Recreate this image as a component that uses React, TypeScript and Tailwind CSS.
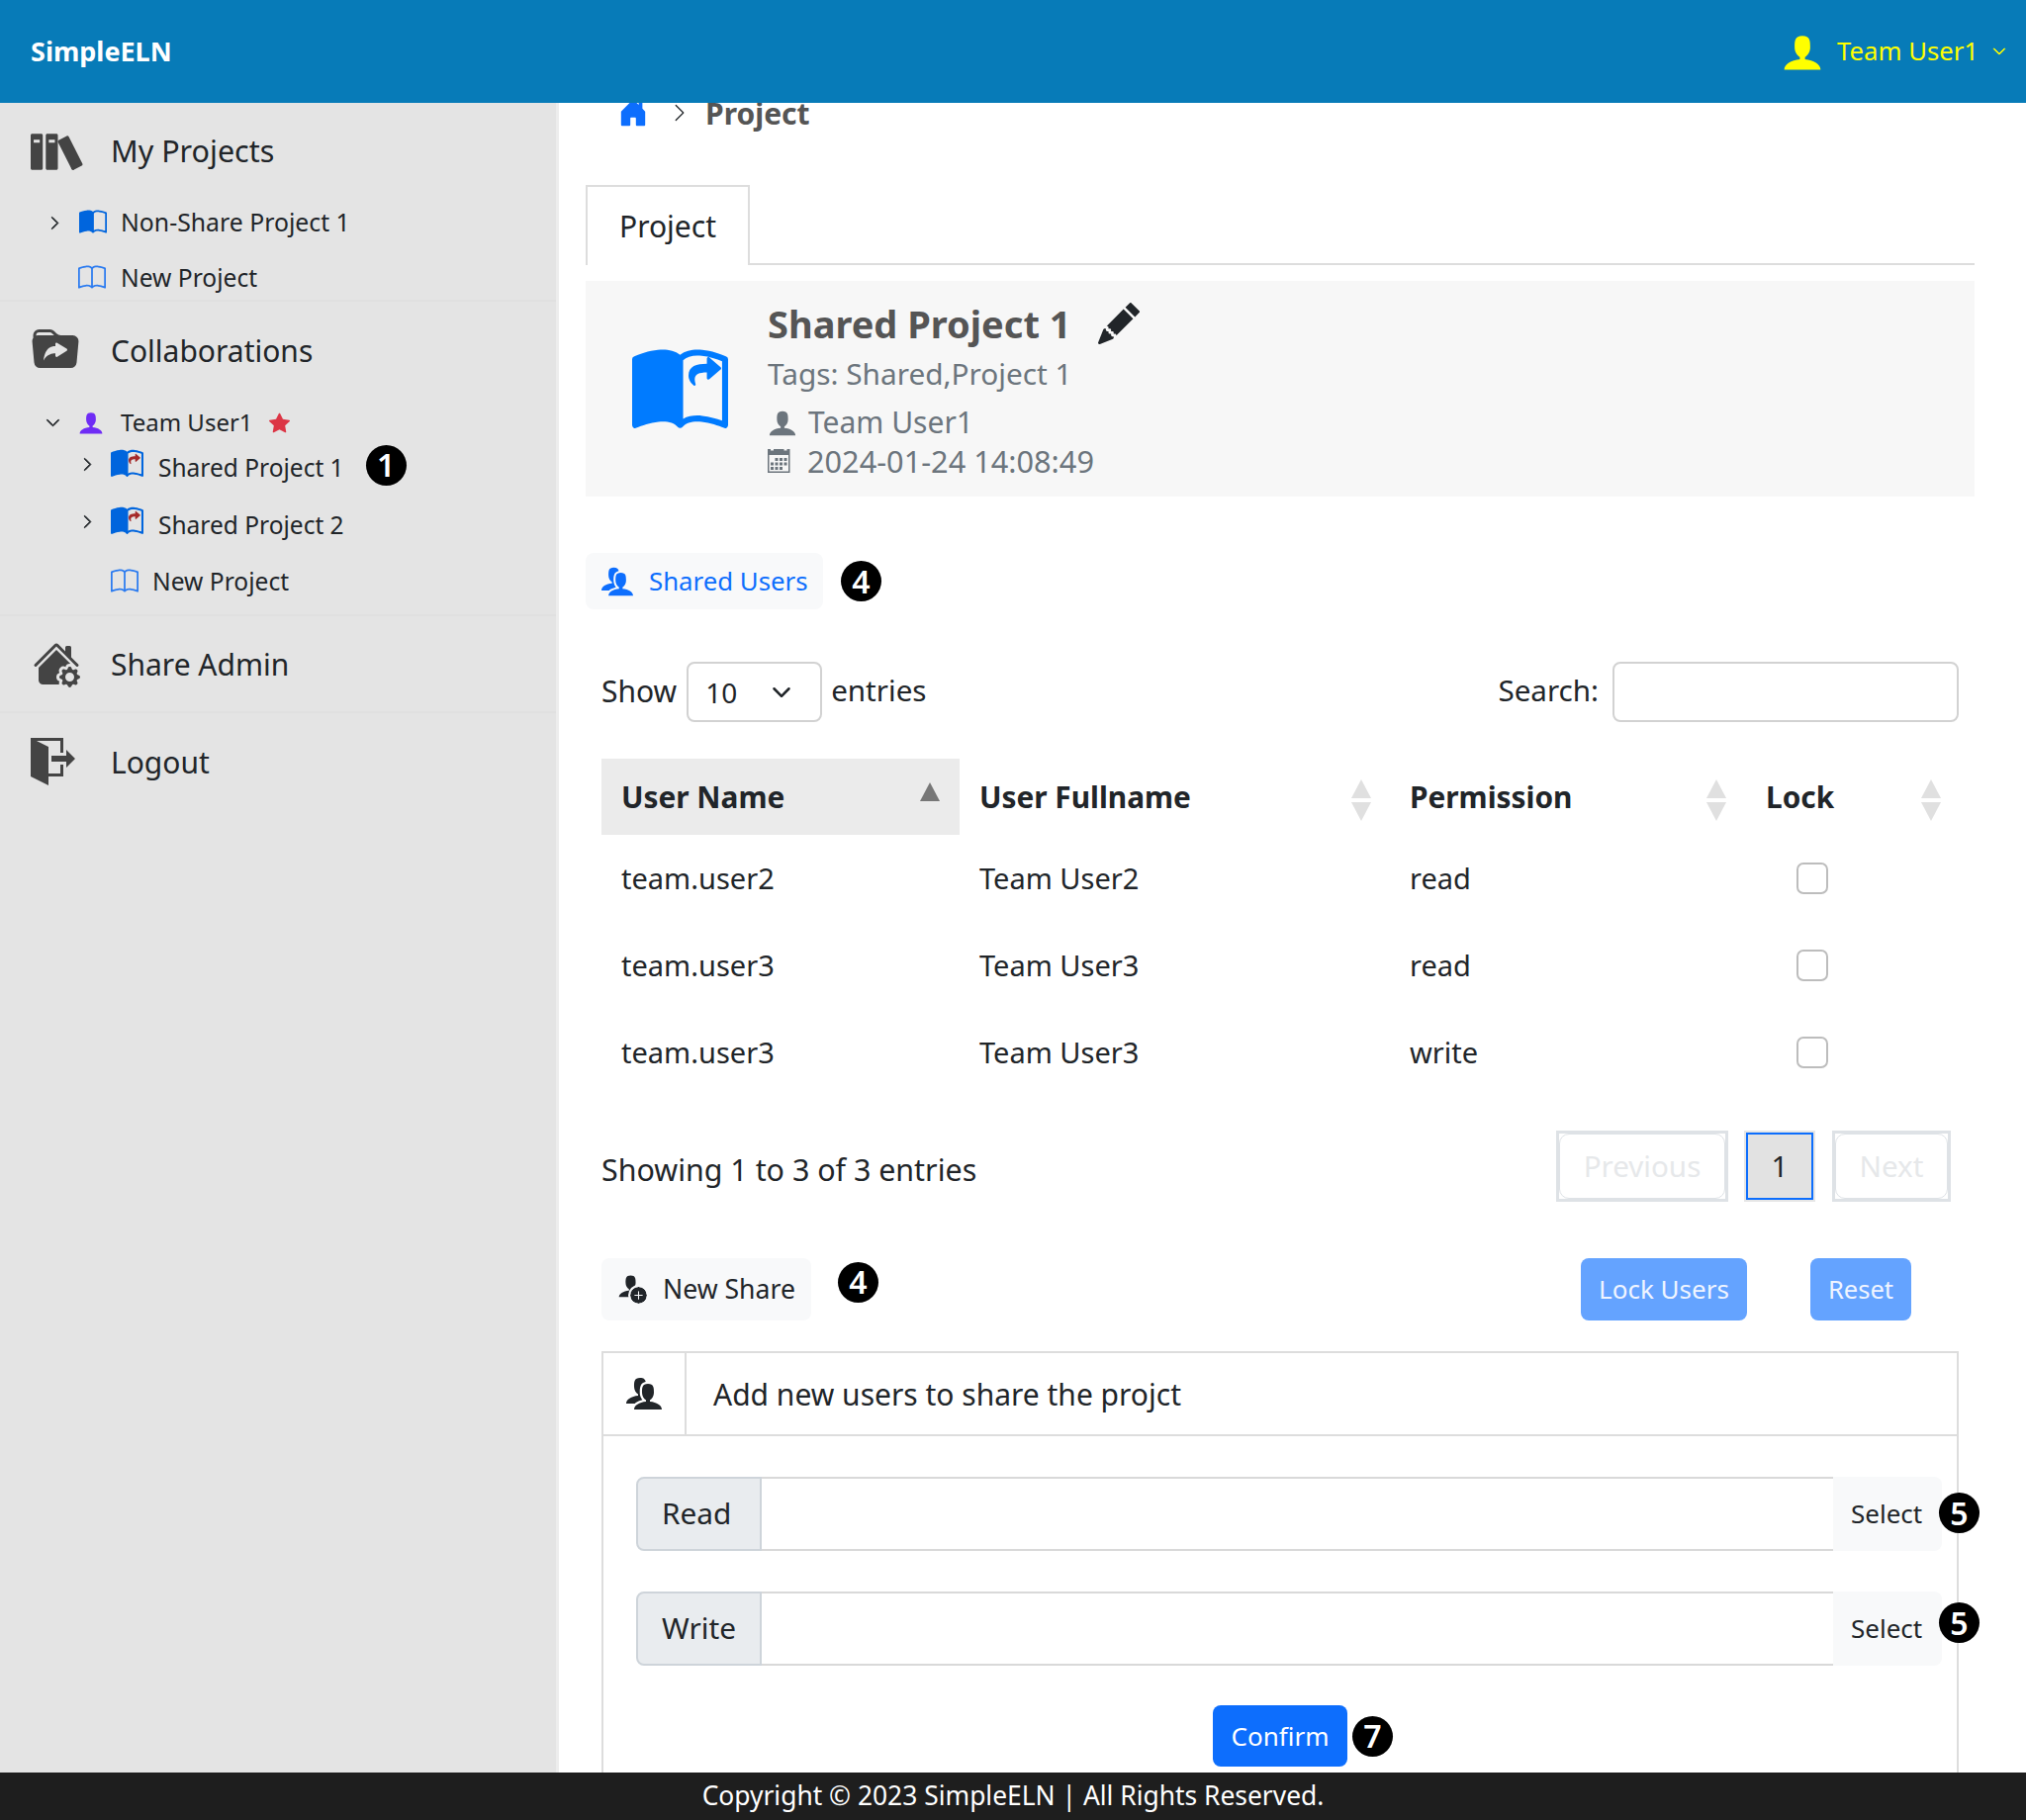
import React from 'react';
import { BsBook, BsBookHalf, BsChevronDown, BsChevronRight, BsFillHouseGearFill, BsFolderSymlinkFill, BsHouseDoorFill, BsPencilFill, BsPlusCircleFill, BsStarFill } from 'react-icons/bs';
import { FaShare } from 'react-icons/fa';
import { ImBooks, ImCalendar, ImExit, ImUser, ImUsers } from 'react-icons/im';

function Badge({ n, className = '' }: { n: number; className?: string }) {
    return (
        <span className={`inline-flex w-[41px] h-[41px] shrink-0 items-center justify-center rounded-full bg-black text-white text-[32px] font-semibold leading-none ${className}`}>
            {n}
        </span>
    );
}

function SharedBook({ size, arrow, className = '' }: { size: number; arrow: string; className?: string }) {
    return (
        <span className={`relative inline-block shrink-0 text-[#0065dd] ${className}`} style={{ width: size, height: size }}>
            <BsBookHalf size={size} />
            <FaShare size={size * 0.36} className={`absolute ${arrow}`} style={{ left: size * 0.56, top: size * 0.16 }} />
        </span>
    );
}

function SortArrows({ active }: { active?: boolean }) {
    if (active) {
        return (
            <svg width="20" height="42" viewBox="0 0 20 42" className="shrink-0 mt-[12px]">
                <polygon points="10,0 20,19 0,19" fill="#777777" />
            </svg>
        );
    }
    return (
        <svg width="20" height="42" viewBox="0 0 20 42" className="shrink-0 mt-[6px] translate-x-[1px]">
            <polygon points="10,0 20,19 0,19" fill="#e0e0e0" />
            <polygon points="0,23 20,23 10,42" fill="#e0e0e0" />
        </svg>
    );
}

const rows = [
    ['team.user2', 'Team User2', 'read'],
    ['team.user3', 'Team User3', 'read'],
    ['team.user3', 'Team User3', 'write'],
];

function Sidebar() {
    return (
        <aside className="w-[565px] shrink-0 bg-[#e4e4e4] border-r-[3px] border-[#ededed] text-[#212529]">
            <div className="h-[201px] pt-[22px] border-b-[2px] border-[#e0e0e0]">
                <div className="h-[54px] flex items-center pl-[31px] text-[#444444]">
                    <ImBooks size={55} className="shrink-0" />
                    <span className="ml-[26px] text-[30.5px] text-[#212529]">My Projects</span>
                </div>
                <div className="h-[56px] mt-[17px] flex items-center pl-[48px]">
                    <BsChevronRight size={15} className="stroke-1" />
                    <BsBookHalf size={28} className="ml-[17px] text-[#0065dd]" />
                    <span className="ml-[14px] text-[24.8px]">Non-Share Project 1</span>
                </div>
                <div className="h-[48px] mt-[4px] flex items-center pl-[79px]">
                    <BsBook size={28} className="text-[#2b7bf0]" />
                    <span className="ml-[15px] text-[24.6px]">New Project</span>
                </div>
            </div>
            <div className="h-[318px] pt-[22px] border-b-[2px] border-[#e0e0e0]">
                <div className="h-[54px] flex items-center pl-[32px] text-[#444444]">
                    <BsFolderSymlinkFill size={48} className="shrink-0" />
                    <span className="ml-[32px] text-[30px] text-[#212529]">Collaborations</span>
                </div>
                <div className="h-[40px] mt-[26px] flex items-center pl-[46px]">
                    <BsChevronDown size={15} className="stroke-1" />
                    <ImUser size={26} className="ml-[18px] text-[#6f2cf5]" />
                    <span className="ml-[17px] text-[24px]">Team User1</span>
                    <BsStarFill size={21} className="ml-[16px] text-[#dc3545]" />
                </div>
                <div className="h-[50px] flex items-center pl-[81px]">
                    <BsChevronRight size={15} className="stroke-1 -mt-[6px]" />
                    <SharedBook size={33} arrow="text-[#a52a2a]" className="ml-[16px] -mt-[6px]" />
                    <span className="ml-[15px] mt-[3px] text-[24.5px]">Shared Project 1</span>
                    <Badge n={1} className="ml-[22px] -mt-[4px]" />
                </div>
                <div className="h-[50px] mt-[8px] flex items-center pl-[81px]">
                    <BsChevronRight size={15} className="stroke-1 -mt-[6px]" />
                    <SharedBook size={33} arrow="text-[#a52a2a]" className="ml-[16px] -mt-[6px]" />
                    <span className="ml-[15px] mt-[3px] text-[24.5px]">Shared Project 2</span>
                </div>
                <div className="h-[50px] mt-[8px] flex items-center pl-[112px]">
                    <BsBook size={28} className="text-[#2b7bf0]" />
                    <span className="ml-[14px] text-[24.6px]">New Project</span>
                </div>
            </div>
            <div className="h-[98px] flex items-center pl-[33px] border-b-[2px] border-[#e0e0e0] text-[#444444]">
                <BsFillHouseGearFill size={48} className="shrink-0" />
                <span className="ml-[31px] text-[30px] text-[#212529]">Share Admin</span>
            </div>
            <div className="h-[98px] flex items-center pl-[31px] text-[#444444]">
                <ImExit size={48} className="shrink-0" />
                <span className="ml-[33px] text-[30px] text-[#212529]">Logout</span>
            </div>
        </aside>
    );
}

function SharedTable() {
    return (
        <table className="w-[1372px] ml-[16px] mt-[37px] table-fixed border-collapse text-[29px] text-[#212529]">
            <thead>
                <tr className="h-[77px] text-[29.8px] font-semibold">
                    <th className="w-[362px] bg-[#ebebeb] pl-[20px] pr-[20px] text-left">
                        <div className="flex items-center justify-between"><span className="mt-[2px]">User Name</span><SortArrows active /></div>
                    </th>
                    <th className="w-[435px] pl-[20px] pr-[20px] text-left">
                        <div className="flex items-center justify-between"><span className="mt-[2px]">User Fullname</span><SortArrows /></div>
                    </th>
                    <th className="w-[360px] pl-[20px] pr-[21px] text-left">
                        <div className="flex items-center justify-between"><span className="mt-[2px]">Permission</span><SortArrows /></div>
                    </th>
                    <th className="pl-[20px] pr-[19px] text-left">
                        <div className="flex items-center justify-between"><span className="mt-[2px]">Lock</span><SortArrows /></div>
                    </th>
                </tr>
            </thead>
            <tbody>
                {rows.map((r, i) => (
                    <tr key={i} className="h-[88px]">
                        <td className="pl-[20px]">{r[0]}</td>
                        <td className="pl-[20px]">{r[1]}</td>
                        <td className="pl-[20px]">{r[2]}</td>
                        <td className="pl-[51px]">
                            <input type="checkbox" className="block w-8 h-8 appearance-none bg-white border-2 border-[#bdbdbd] rounded-[7px]" />
                        </td>
                    </tr>
                ))}
            </tbody>
        </table>
    );
}

function SelectRow({ label, badgeClass }: { label: string; badgeClass: string }) {
    return (
        <div className="relative flex h-[75px] ml-[33px] w-[1320px]">
            <div className="w-[127px] flex items-center pl-[24px] bg-[#e9ecef] border-2 border-[#ced4da] rounded-l-[8px] text-[29.8px]">{label}</div>
            <div className="flex-1 border-y-2 border-[#d9d9d9]"></div>
            <button className="w-[110px] pl-[18px] text-left text-[26px] text-[#212529] bg-[#f8f9fa] rounded-r-[8px]">Select</button>
            <Badge n={5} className={`absolute -right-[38px] ${badgeClass}`} />
        </div>
    );
}

export default function App() {
    return (
        <div className="h-[1840px] flex flex-col overflow-hidden bg-white font-['Noto_Sans',sans-serif] text-[28px] text-[#212529]">
            <header className="h-[104px] shrink-0 flex items-center justify-between bg-[#077bb8] pl-[31px] pr-[20px]">
                <span className="text-[27px] font-bold text-white">SimpleELN</span>
                <div className="flex items-center text-[#ffff00]">
                    <ImUser size={42} />
                    <span className="ml-[14px] text-[25.7px]">Team User1</span>
                    <BsChevronDown size={14} className="ml-[14px] stroke-1" />
                </div>
            </header>
            <div className="flex-1 flex min-h-0">
                <Sidebar />
                <main className="flex-1 min-w-0 overflow-hidden pl-[27px] pr-[52px]">
                    <div className="h-[50px] -mt-[15px] flex items-center pl-[33px]">
                        <BsHouseDoorFill size={30} className="text-[#0d6efd]" />
                        <BsChevronRight size={20} className="ml-[22px]" />
                        <span className="ml-[16px] text-[30px] font-bold text-[#555555]">Project</span>
                    </div>
                    <div className="mt-[48px] h-[81px] border-b-2 border-[#dddddd]">
                        <div className="w-[166px] h-[81px] flex items-center justify-center bg-white border-2 border-b-0 border-[#dddddd] text-[30px]">Project</div>
                    </div>
                    <section className="mt-[16px] h-[218px] flex bg-[#f7f7f7]">
                        <div className="w-[184px] shrink-0 flex items-center pl-[47px]">
                            <span className="relative block w-[97px] h-[97px] mt-[7px] text-[#007bff]">
                                <BsBookHalf size={97} />
                                <FaShare size={33} className="absolute left-[57px] top-[11px]" />
                            </span>
                        </div>
                        <div className="min-w-0">
                            <div className="flex items-center h-[60px] mt-[13px]">
                                <span className="text-[38px] font-bold text-[#555555]">Shared Project 1</span>
                                <BsPencilFill size={42} className="ml-[27px] text-[#212529]" />
                            </div>
                            <div className="h-[40px] mt-[1px] flex items-center text-[29.8px] text-[#6c757d]">Tags: Shared,Project 1</div>
                            <div className="h-[49px] mt-[4px] flex items-center text-[30px] text-[#6c757d]">
                                <ImUser size={30} />
                                <span className="ml-[11px]">Team User1</span>
                            </div>
                            <div className="h-[30px] flex items-center text-[30.7px] text-[#6c757d]">
                                <ImCalendar size={24} />
                                <span className="ml-[16px]">2024-01-24 14:08:49</span>
                            </div>
                        </div>
                    </section>
                    <div className="mt-[57px] flex items-center">
                        <button className="w-[240px] h-[57px] flex items-center pl-[16px] bg-[#f8f9fa] rounded-[8px] text-[#0d6efd]">
                            <ImUsers size={32} />
                            <span className="ml-[16px] text-[25.8px]">Shared Users</span>
                        </button>
                        <Badge n={4} className="ml-[18px]" />
                    </div>
                    <div className="mt-[53px] ml-[16px] w-[1372px] h-[61px] flex items-center justify-between text-[29.6px]">
                        <div className="flex items-center">
                            <span className="-mt-[3px] text-[30px]">Show</span>
                            <div className="ml-[10px] w-[137px] h-[61px] flex items-center justify-between pl-[17px] pr-[29px] border-2 border-[#d2d2d2] rounded-[8px] text-[28px]">
                                <span>10</span>
                                <BsChevronDown size={20} className="stroke-1" />
                            </div>
                            <span className="ml-[9px] -mt-[3px]">entries</span>
                        </div>
                        <div className="flex items-center">
                            <span className="-mt-[3px]">Search:</span>
                            <input className="ml-[14px] w-[350px] h-[61px] border-2 border-[#d2d2d2] rounded-[8px]" />
                        </div>
                    </div>
                    <SharedTable />
                    <div className="mt-[35px] ml-[16px] w-[1364px] h-[72px] flex items-center justify-between">
                        <span className="mt-[8px] text-[30.4px]">Showing 1 to 3 of 3 entries</span>
                        <div className="flex items-center text-[29.6px] text-[#e6e8ea]">
                            <div className="w-[174px] h-[72px] border-[3px] border-[#dee2e6]">
                                <div className="w-full h-full flex items-center justify-center border border-[#dee2e6] rounded-[10px]">Previous</div>
                            </div>
                            <div className="ml-[16px] w-[72px] h-[72px] border-[2px] border-[#e6e6e6]">
                                <div className="w-full h-full flex items-center justify-center bg-[#e2e2e2] border-2 border-[#0d6efd] text-[#212529]">1</div>
                            </div>
                            <div className="ml-[17px] w-[120px] h-[72px] border-[3px] border-[#dee2e6]">
                                <div className="w-full h-full flex items-center justify-center border border-[#dee2e6] rounded-[10px]">Next</div>
                            </div>
                        </div>
                    </div>
                    <div className="mt-[57px] ml-[16px] w-[1324px] h-[63px] flex items-center">
                        <button className="w-[212px] h-[63px] flex items-center pl-[16px] bg-[#f8f9fa] rounded-[8px]">
                            <span className="relative block w-[30px] h-[32px] -mt-[4px]">
                                <ImUser size={27} className="absolute left-0 top-0" />
                                <BsPlusCircleFill size={17} className="absolute right-0 bottom-0 bg-[#f8f9fa] rounded-full outline-2 outline-[#f8f9fa]" />
                            </span>
                            <span className="ml-[16px] text-[26.6px]">New Share</span>
                        </button>
                        <Badge n={4} className="ml-[27px] -mt-[15px]" />
                        <button className="ml-auto w-[168px] h-[63px] bg-[#64a3ff] rounded-[8px] text-[26px] text-[#f0f5ff]">Lock Users</button>
                        <button className="ml-[64px] w-[102px] h-[63px] bg-[#64a3ff] rounded-[8px] text-[25.5px] text-[#f0f5ff]">Reset</button>
                    </div>
                    <div className="mt-[31px] ml-[16px] w-[1372px] h-[500px] border-2 border-[#dddddd]">
                        <div className="h-[84px] flex border-b-2 border-[#dddddd]">
                            <div className="w-[84px] flex items-center justify-center border-r-2 border-[#dddddd]"><ImUsers size={36} /></div>
                            <div className="flex items-center pl-[27px] text-[30px]">Add new users to share the projct</div>
                        </div>
                        <div className="pt-[41px]">
                            <SelectRow label="Read" badgeClass="top-[16px]" />
                            <div className="h-[41px]"></div>
                            <SelectRow label="Write" badgeClass="top-[11px]" />
                            <div className="mt-[40px] ml-[616px] flex items-center">
                                <button className="w-[136px] h-[62px] bg-[#0d6efd] rounded-[8px] text-[26px] text-white">Confirm</button>
                                <Badge n={7} className="ml-[5px]" />
                            </div>
                        </div>
                    </div>
                </main>
            </div>
            <footer className="h-[48px] shrink-0 flex items-center justify-center bg-[#1e1e1e] text-[26.4px] text-white">
                Copyright © 2023 SimpleELN | All Rights Reserved.
            </footer>
        </div>
    );
}
